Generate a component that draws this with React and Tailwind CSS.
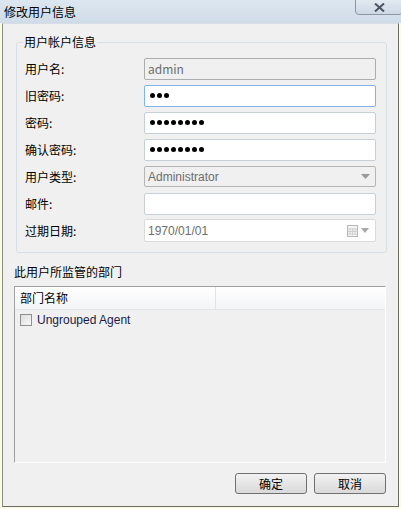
import React from 'react';

const font = { fontFamily: '"Noto Sans CJK SC", "Liberation Sans", sans-serif' };

function Field({ label, children }) {
  return (
    <div className="flex items-center h-[27px]">
      <div className="w-[127px] pl-[8px] text-[12px] text-black">{label}</div>
      {children}
    </div>
  );
}

function Dots({ n }) {
  return (
    <div className="flex gap-[2px] pl-[5px]">
      {Array.from({ length: n }).map((_, i) => (
        <span key={i} className="w-[5px] h-[5px] rounded-full bg-black" />
      ))}
    </div>
  );
}

export default function App() {
  return (
    <div className="w-[401px] h-[509px] bg-[#fbfbe9] relative overflow-hidden" style={font}>
      {/* title bar */}
      <div className="h-[23px] bg-gradient-to-b from-[#dde7f1] to-[#cfdbe7] flex items-center pl-[4px] text-[12px] text-black">
        修改用户信息
      </div>
      <div className="absolute right-[-2px] top-[-2px] w-[48px] h-[17px] rounded-b-[4px] border border-[#8a96a4] bg-gradient-to-b from-[#e4ebf2] to-[#cdd8e4] flex items-center justify-center pt-[2px]">
        <svg width="11" height="9" viewBox="0 0 11 9">
          <path d="M1 0.5L10 8.5M10 0.5L1 8.5" stroke="#4a5563" strokeWidth="2" />
        </svg>
      </div>

      {/* client */}
      <div className="absolute left-[2px] top-[23px] w-[397px] h-[484px] border border-[#6e6e62] border-t-[#d6dde4] border-l-[#8b8b80] bg-[#f0f0f0] flex flex-col">
        {/* groupbox */}
        <div className="relative mt-[18px] ml-[13px] w-[371px] h-[211px] border border-[#d5dfe5] rounded-[3px]">
          <div className="absolute left-[6px] top-[-9px] px-[1px] bg-[#f0f0f0] text-[12px] leading-[16px] text-black">用户帐户信息</div>
          <div className="flex flex-col pt-[12px]">
            <Field label="用户名:">
              <div className="w-[232px] h-[22px] border border-[#adadad] rounded-[2px] bg-[#f0f0f0] flex items-center pl-[3px] text-[12px] text-[#6d6d6d]">admin</div>
            </Field>
            <Field label="旧密码:">
              <div className="w-[232px] h-[22px] border border-[#7eb4ea] rounded-[2px] bg-white flex items-center"><Dots n={3} /></div>
            </Field>
            <Field label="密码:">
              <div className="w-[232px] h-[22px] border border-[#c5cfd7] rounded-[2px] bg-white flex items-center"><Dots n={8} /></div>
            </Field>
            <Field label="确认密码:">
              <div className="w-[232px] h-[22px] border border-[#c5cfd7] rounded-[2px] bg-white flex items-center"><Dots n={8} /></div>
            </Field>
            <Field label="用户类型:">
              <div className="w-[232px] h-[21px] border border-[#b5b5b5] rounded-[2px] bg-[#f0f0f0] flex items-center justify-between pl-[3px] pr-[5px] text-[12px] text-[#6d6d6d]" style={{ fontFamily: '"Liberation Sans", sans-serif' }}>
                Administrator
                <svg width="9" height="5" viewBox="0 0 9 5"><path d="M0 0h9L4.5 5z" fill="#9a9a9a" /></svg>
              </div>
            </Field>
            <Field label="邮件:">
              <div className="w-[232px] h-[22px] border border-[#c5cfd7] rounded-[2px] bg-white" />
            </Field>
            <Field label="过期日期:">
              <div className="w-[232px] h-[23px] border border-[#dadada] rounded-[2px] bg-white flex items-center justify-between pl-[3px] pr-[6px] text-[12px] text-[#6d6d6d]" style={{ fontFamily: '"Liberation Sans", sans-serif' }}>
                1970/01/01
                <div className="flex items-center gap-[2px]">
                  <svg width="12" height="12" viewBox="0 0 12 12">
                    <rect x="0.5" y="0.5" width="10" height="11" fill="#f4f4f4" stroke="#b8b8b8" />
                    <path d="M3 3v7M5.5 3v7M8 3v7M1 4h9M1 6.5h9M1 9h9" stroke="#d0d0d0" strokeWidth="1" />
                  </svg>
                  <svg width="8" height="5" viewBox="0 0 8 5"><path d="M0 0h8L4 5z" fill="#a8a8a8" /></svg>
                </div>
              </div>
            </Field>
          </div>
        </div>

        <div className="ml-[11px] mt-[11px] text-[12px] text-black leading-[16px]">此用户所监管的部门</div>

        {/* list */}
        <div className="ml-[11px] mt-[6px] w-[372px] h-[177px] border-t border-l border-[#a0a0a0] border-r border-r-white border-b border-b-white flex flex-col">
          <div className="h-[23px] flex bg-gradient-to-b from-white to-[#f3f4f6] border-b border-[#e3e6ea]">
            <div className="w-[201px] border-r border-[#dfe2e6] flex items-center pl-[5px] text-[12px] text-black">部门名称</div>
            <div className="flex-1" />
          </div>
          <div className="flex items-center h-[20px] pl-[5px] gap-[5px]">
            <div className="w-[12px] h-[12px] border border-[#8f8f8f] bg-gradient-to-br from-[#dcdcdc] to-[#f8f8f8]" />
            <span className="text-[12px] text-[#1a1a4a]" style={{ fontFamily: '"Liberation Sans", sans-serif' }}>Ungrouped Agent</span>
          </div>
        </div>

        {/* buttons */}
        <div className="flex justify-end gap-[7px] mt-[10px] pr-[12px]">
          <button className="w-[72px] h-[21px] border border-[#707070] rounded-[3px] bg-gradient-to-b from-[#f2f2f2] to-[#d9d9d9] text-[12px] text-black leading-none">确定</button>
          <button className="w-[72px] h-[21px] border border-[#707070] rounded-[3px] bg-gradient-to-b from-[#f2f2f2] to-[#d9d9d9] text-[12px] text-black leading-none">取消</button>
        </div>
      </div>
    </div>
  );
}
